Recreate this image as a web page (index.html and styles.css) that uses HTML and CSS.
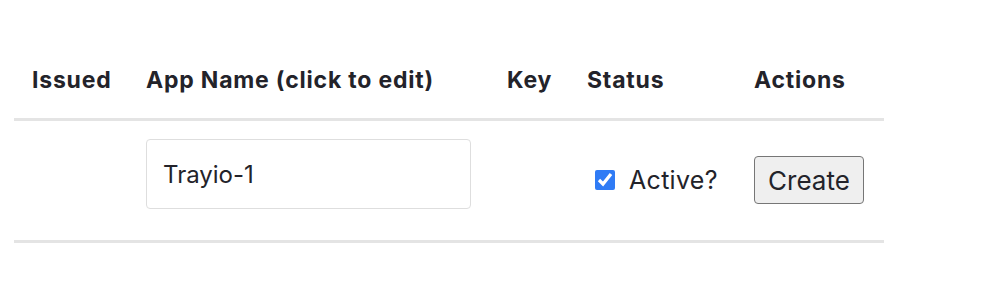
FILE: index.html
```html
<!DOCTYPE html>
<html lang="en">
<head>
    <meta charset="UTF-8">
    <title>API Keys</title>
    <link rel="stylesheet" href="styles.css">
</head>
<body>
    <div class="page">
        <table class="keys-table">
            <colgroup>
                <col class="col-issued">
                <col class="col-name">
                <col class="col-key">
                <col class="col-status">
                <col class="col-actions">
            </colgroup>
            <thead>
                <tr>
                    <th>Issued</th>
                    <th>App Name (click to edit)</th>
                    <th>Key</th>
                    <th>Status</th>
                    <th>Actions</th>
                </tr>
            </thead>
            <tbody>
                <tr>
                    <td></td>
                    <td><input class="name-input" type="text" value="Trayio-1"></td>
                    <td></td>
                    <td>
                        <label class="status">
                            <input type="checkbox" checked>
                            <span>Active?</span>
                        </label>
                    </td>
                    <td><button class="create-btn">Create</button></td>
                </tr>
            </tbody>
        </table>
    </div>
</body>
</html>
```

FILE: styles.css
```css
* {
    box-sizing: border-box;
    margin: 0;
    padding: 0;
}

body {
    background: #fff;
    color: #23232a;
    font-family: Inter, Lato, 'Liberation Sans', sans-serif;
}

.page {
    padding: 42px 0 0 14px;
}

.keys-table {
    width: 870px;
    border-collapse: collapse;
    table-layout: fixed;
}

.col-issued { width: 114px; }
.col-name { width: 361px; }
.col-key { width: 80px; }
.col-status { width: 167px; }
.col-actions { width: 148px; }

.keys-table th {
    text-align: left;
    font-size: 23px;
    font-weight: 700;
    letter-spacing: 0.8px;
    line-height: 28px;
    padding: 24px 0 24px 18px;
    border-bottom: 3px solid #e4e4e4;
    white-space: nowrap;
}

.keys-table td {
    padding: 18px 0 19px 18px;
    vertical-align: middle;
    border-bottom: 3px solid #e4e4e4;
    font-size: 25px;
}

.name-input {
    display: block;
    width: 325px;
    height: 70px;
    margin-bottom: 12px;
    padding: 0 16px;
    border: 1px solid #dedede;
    border-radius: 4px;
    font-family: inherit;
    font-size: 24px;
    color: #23232a;
    outline: none;
}

.status {
    display: flex;
    align-items: center;
    gap: 14px;
    padding-left: 8px;
    letter-spacing: 0.3px;
}

.status input {
    width: 20px;
    height: 20px;
    accent-color: #2f7bf5;
}

.create-btn {
    width: 110px;
    height: 48px;
    background: #efefef;
    border: 1px solid #767676;
    border-radius: 4px;
    font-family: inherit;
    font-size: 26px;
    color: #23232a;
}
```
